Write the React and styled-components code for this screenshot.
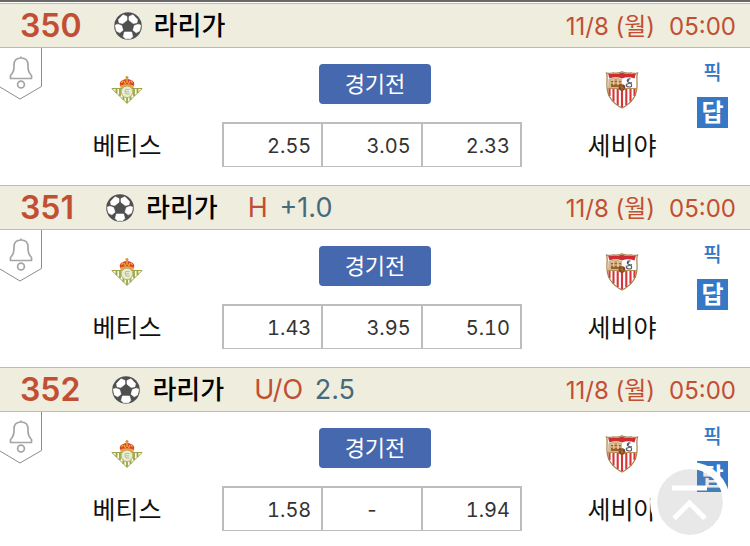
import React from 'react';
import styled, { createGlobalStyle } from 'styled-components';

const matches = [
  { id: 350, type: '', line: '', odds: ['2.55', '3.05', '2.33'] },
  { id: 351, type: 'H', line: '+1.0', odds: ['1.43', '3.95', '5.10'] },
  { id: 352, type: 'U/O', line: '2.5', odds: ['1.58', '-', '1.94'] },
];

const SoccerBall = () => (
  <svg width="28" height="28" viewBox="0 0 28 28" aria-hidden="true">
    <circle cx="14" cy="14" r="13.8" fill="#4f4f4f" />
    <g fill="#fff" stroke="#fff" strokeWidth=".6" strokeLinejoin="round">
      <path d="M4.500 7.500 9 2.800 13 4.500V8.200L8.800 11.600 5 10.800Z" />
      <path d="M23.500 7.500 19 2.800 15 4.500V8.200L19.200 11.600 23 10.800Z" />
      <path d="M1.200 13.200 3.600 12.200 7.600 13.600 9 18.200 5.800 20.800 2.400 19Z" />
      <path d="M26.800 13.200 24.400 12.200 20.400 13.600 19 18.200 22.200 20.800 25.600 19Z" />
      <path d="M10.400 20H17.600L18.800 24.600 16.600 26.800H11.400L9.200 24.600Z" />
    </g>
    <path d="M14 9.200 18.600 12.600 17 17.800H11L9.400 12.600Z" fill="#4f4f4f" />
  </svg>
);

const BetisCrest = () => (
  <svg width="32" height="28" viewBox="0 0 32 28" aria-hidden="true">
    <path d="M10 11C7 7 9.500 3.500 16 3 22.500 3.500 25 7 22 11Z" fill="#d9432f" />
    <path d="M10.500 7 12 4.500M21.500 7 20 4.500M16 2.500V7M13 5 14.500 8M19 5 17.500 8" stroke="#efb13c" strokeWidth="1.300" />
    <circle cx="16" cy="1.600" r="1.500" fill="#d29535" />
    <path d="M9.500 9.500Q16 7 22.500 9.500V12H9.500Z" fill="#eda43b" />
    <path d="M13 10.500H19" stroke="#ca3229" strokeWidth="1" />
    <path d="M.8 12.500H31.200L16 27.400Z" fill="#fafae9" stroke="#a0a448" strokeWidth="1" />
    <path d="M5.500 13V17M9 13V20M12.500 20V24M16 21V27M19.500 20V24M23 13V20M26.500 13V17" stroke="#98a34a" strokeWidth="1.800" />
    <circle cx="16" cy="15.800" r="5.800" fill="#e7ebcf" stroke="#b4b36b" strokeWidth="1" />
    <path d="M18.500 13.500H14.500Q13.500 16 15 18H18.500M14.500 15.800H18" fill="none" stroke="#b7c08f" strokeWidth="1" />
  </svg>
);

const SevillaCrest = () => (
  <svg width="34" height="38" viewBox="0 0 34 38" aria-hidden="true">
    <path d="M1.500 2Q5 3 8 1.800 12.500 3 17 .8 21.500 3 26 1.800 29 3 32.500 2C31 6 32.500 10 32 16 31.500 26 25 33 17 37 9 33 2.500 26 2 16 1.500 10 3 6 1.500 2Z" fill="#fff" />
    <path d="M3 2.500Q6 3.500 8 2.500 12.500 3.500 17 1.500 21.500 3.500 26 2.500 28 3.500 31 2.500L29.500 7.500Q23 5 17 7.500 11 5 4.500 7.500Z" fill="#ce2e32" />
    <path d="M3.500 8Q11 5 17 8V17H3Z" fill="#d6b68b" />
    <path d="M6 16V10H8V14H9.500V8H12V14H14V10H16V16" fill="#9d6131" />
    <path d="M6 12H16M8 9H13" stroke="#f1d8a7" strokeWidth="1.200" />
    <path d="M25.500 8Q21.500 7.500 22.500 10.500L26 12.500Q28 16 24 16 20.500 15.500 21.500 13M23.500 7.500V10M21 13.500 27 11.500" fill="none" stroke="#545b68" strokeWidth="1.200" />
    <path d="M4.500 18V25M8.500 18V30.500M12.700 18V34M17 19V36M21.300 18V34M25.500 18V30.500M29.500 18V25" stroke="#d83337" strokeWidth="2.100" />
    <path d="M2.500 17.500H31.500" stroke="#b78d58" strokeWidth="1" />
    <circle cx="17" cy="16.500" r="3.300" fill="#7e461f" />
    <path d="M14.500 15.500 19.500 17.500M17 13.500V19" stroke="#bb7939" strokeWidth=".8" />
    <path d="M1.500 2Q5 3 8 1.800 12.500 3 17 .8 21.500 3 26 1.800 29 3 32.500 2C31 6 32.500 10 32 16 31.500 26 25 33 17 37 9 33 2.500 26 2 16 1.500 10 3 6 1.500 2Z" fill="none" stroke="#a4824e" strokeWidth="1.200" />
  </svg>
);

const BellTag = () => (
  <svg width="42" height="52" viewBox="0 0 42 52" fill="none" aria-hidden="true">
    <path d="M41.500 0V38.500L20 51 0 39" stroke="#8b8b8b" strokeWidth="1" />
    <path d="M21 8.500V10M10.500 30.500V27.500Q14 24 14 19V17Q14 10 21 10 28 10 28 17V19Q28 24 31.500 27.500V30.500Z" stroke="#a5a5a5" strokeWidth="1.700" strokeLinejoin="round" />
    <circle cx="21" cy="36.500" r="3.400" stroke="#a5a5a5" strokeWidth="1.700" />
  </svg>
);

const App = () => (
  <>
    <GlobalStyle />
    <Page>
      {matches.map((match) => (
        <section key={match.id}>
          <Header>
            <Number>{match.id}</Number>
            <SoccerBall />
            <League>라리가</League>
            {match.type && (
              <Handicap>
                {match.type} <Line>{match.line}</Line>
              </Handicap>
            )}
            <Kickoff>
              <span>11/8 (월)</span>
              <span>05:00</span>
            </Kickoff>
          </Header>
          <Body>
            <AlarmButton type="button" aria-label="alarm">
              <BellTag />
            </AlarmButton>
            <Team $side="home">
              <Crest><BetisCrest /></Crest>
              <TeamName>베티스</TeamName>
            </Team>
            <Center>
              <Status type="button">경기전</Status>
              <OddsTable>
                <tbody>
                  <tr>
                    {match.odds.map((odd, i) => (
                      <Odd key={i} $empty={odd === '-'}>{odd}</Odd>
                    ))}
                  </tr>
                </tbody>
              </OddsTable>
            </Center>
            <Team $side="away">
              <Crest><SevillaCrest /></Crest>
              <TeamName>세비야</TeamName>
            </Team>
            <Picks>
              <PickButton type="button">픽</PickButton>
              <PickButton type="button" $filled>답</PickButton>
            </Picks>
          </Body>
        </section>
      ))}
      <TopButton type="button" aria-label="top">
        <svg width="36" height="38" viewBox="0 0 36 38" fill="none" stroke="#fff" strokeWidth="5">
          <path d="M0 5H35" />
          <path d="M2 35.500 17.500 20 33 35.500" />
        </svg>
      </TopButton>
    </Page>
  </>
);

const GlobalStyle = createGlobalStyle`
  * {
    box-sizing: border-box;
  }

  body {
    margin: 0;
    background: #fff;
    color: #111;
    font-family: Inter, 'Noto Sans CJK KR', sans-serif;
  }

  button {
    padding: 0;
    border: none;
    background: none;
    font-family: inherit;
    cursor: pointer;
  }

  svg {
    display: block;
    flex-shrink: 0;
  }
`;

const Page = styled.main`
  border-top: 2px solid #6b6967;
  padding-top: 1px;
`;

const Header = styled.header`
  display: flex;
  align-items: center;
  height: 45px;
  padding: 0 14px 0 20px;
  border-top: 1px solid #bdbbb5;
  border-bottom: 1px solid #bdbbb5;
  background: #efedde;
  white-space: nowrap;
`;

const Number = styled.strong`
  margin-right: 32px;
  color: #c14f33;
  font-size: 32px;
  font-weight: 600;
`;

const League = styled.h2`
  margin: 0 0 0 12px;
  color: #000;
  font-size: 26px;
  font-weight: 500;
  line-height: 40px;
`;

const Handicap = styled.span`
  margin-left: 30px;
  color: #c14f33;
  font-size: 27px;
`;

const Line = styled.span`
  margin-left: 4px;
  color: #456a7c;
`;

const Kickoff = styled.div`
  display: flex;
  gap: 14px;
  margin-left: auto;
  padding-top: 2px;
  color: #c14f33;
  font-size: 24px;
  line-height: 40px;
`;

const Body = styled.div`
  display: grid;
  grid-template-columns: 42px 1fr 306px 1fr 42px;
  align-items: start;
  min-height: 137px;
`;

const AlarmButton = styled.button`
  width: 42px;
  height: 52px;
`;

const Team = styled.div`
  display: flex;
  flex-direction: column;
  align-items: center;
  padding-top: 22px;
  padding-left: ${({ $side }) => ($side === 'away' ? '8px' : '0')};
  padding-right: ${({ $side }) => ($side === 'home' ? '10px' : '0')};
`;

const Crest = styled.div`
  display: flex;
  align-items: center;
  height: 40px;
`;

const TeamName = styled.span`
  margin-top: 18px;
  color: #111;
  font-size: 25px;
  line-height: 36px;
`;

const Center = styled.div`
  display: flex;
  flex-direction: column;
  align-items: center;
  gap: 18px;
  padding-top: 16px;
`;

const Status = styled.button`
  width: 112px;
  height: 40px;
  padding-bottom: 4px;
  border-radius: 4px;
  background: #4668ae;
  color: #fff;
  font-size: 22px;
`;

const OddsTable = styled.table`
  align-self: flex-start;
  width: 300px;
  table-layout: fixed;
  border-collapse: collapse;
`;

const Odd = styled.td`
  height: 43px;
  padding: 2px 10px 0;
  border: 2px solid #bdbdbd;
  border-bottom-width: 1px;
  color: #333;
  font-size: 20px;
  font-variant-numeric: tabular-nums;
  text-align: ${({ $empty }) => ($empty ? 'center' : 'right')};
`;

const Picks = styled.div`
  display: flex;
  flex-direction: column;
  align-items: flex-end;
  gap: 8px;
  padding: 10px 22px 0 0;
`;

const PickButton = styled.button`
  width: 31px;
  height: 31px;
  background: ${({ $filled }) => ($filled ? '#3478c6' : 'none')};
  color: ${({ $filled }) => ($filled ? '#fff' : '#3478c6')};
  font-size: ${({ $filled }) => ($filled ? '24px' : '20px')};
  font-weight: ${({ $filled }) => ($filled ? 700 : 500)};
  line-height: 31px;
`;

const TopButton = styled.button`
  position: fixed;
  right: 20px;
  bottom: 4px;
  display: flex;
  align-items: center;
  justify-content: center;
  width: 80px;
  height: 80px;
  border: 7px solid #fff;
  border-radius: 50%;
  background: rgba(140, 140, 140, 0.2);
  background-clip: padding-box;
`;

export default App;
